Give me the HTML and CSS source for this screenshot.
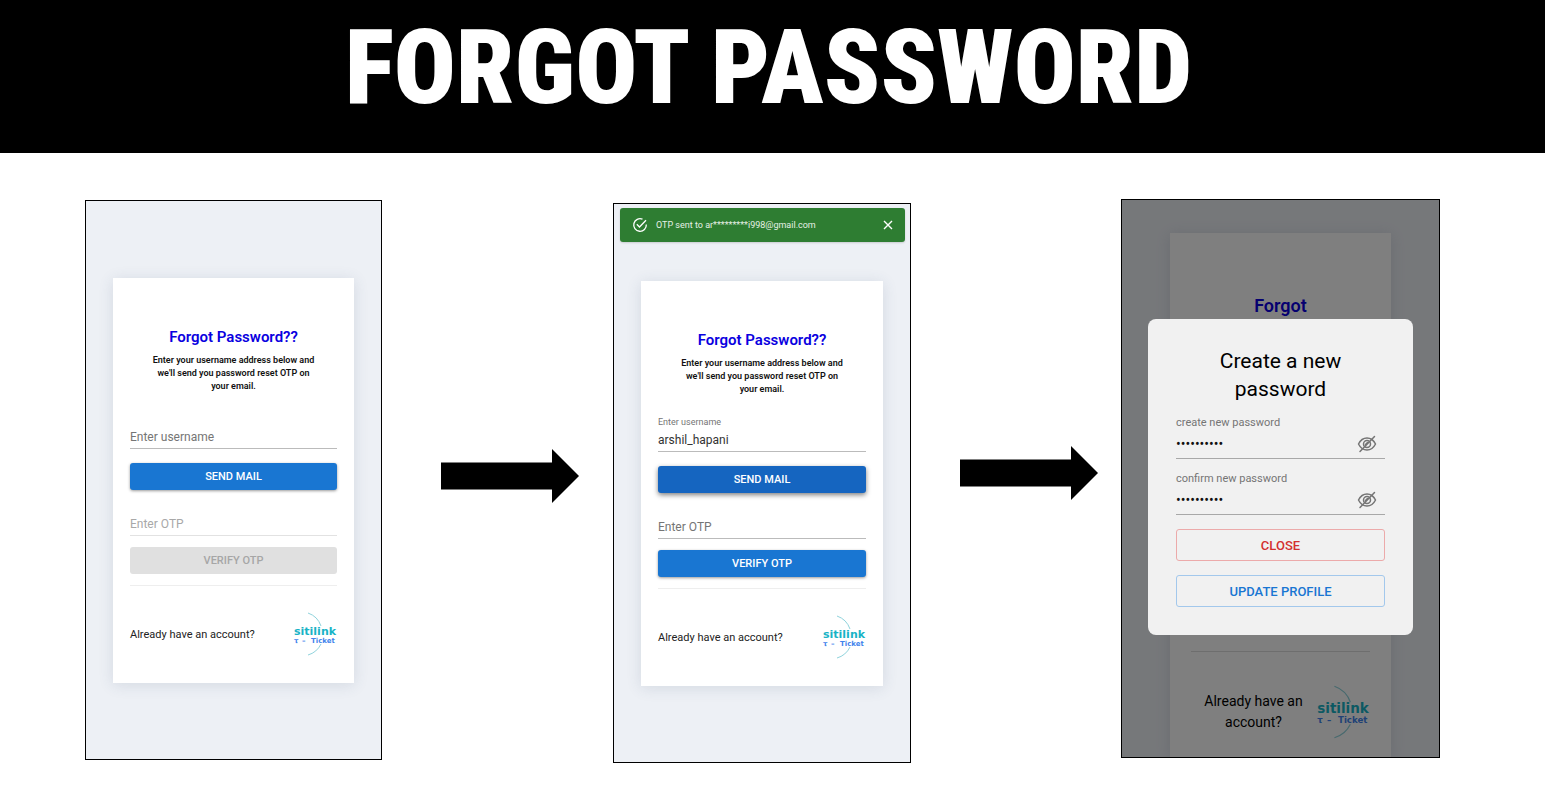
FILE: index.html
```html
<!DOCTYPE html>
<html lang="en">
<head>
<meta charset="utf-8">
<meta name="viewport" content="width=device-width, initial-scale=1">
<title>Forgot Password</title>
<link rel="stylesheet" href="styles.css">
</head>
<body>
<header class="banner"><h1>FORGOT PASSWORD</h1></header>

<main class="flow">
  <section class="phone phone-request">
    <form class="card">
      <h2>Forgot Password??</h2>
      <p class="hint">Enter your username address below and we'll send you password reset OTP on your email.</p>
      <div class="field"><input type="text" placeholder="Enter username" aria-label="Enter username"></div>
      <button type="button" class="btn">SEND MAIL</button>
      <div class="field field-otp field-off"><input type="text" placeholder="Enter OTP" aria-label="Enter OTP" disabled></div>
      <button type="button" class="btn" disabled>VERIFY OTP</button>
      <hr>
      <div class="account">
        <span>Already have an account?</span>
        <svg class="logo" viewBox="0 0 44 44">
          <path d="M15 1A21 21 0 0 1 28 14M28 32A21 21 0 0 1 15 43"/>
          <text x="1" y="23" class="logo-name">sitilink</text>
          <text x="1" y="31" class="logo-sub">τ</text>
          <text x="9" y="31" class="logo-sub">–</text>
          <text x="18" y="31" class="logo-sub">Ticket</text>
        </svg>
      </div>
    </form>
  </section>

  <svg class="arrow arrow-first" viewBox="0 0 138 56" aria-hidden="true"><path d="M0 14.500H111V1L138 28L111 55V41.500H0Z"/></svg>

  <section class="phone phone-sent">
    <div class="toast" role="status">
      <svg class="check" viewBox="0 0 16 16" aria-hidden="true"><path d="M14.300 7.500A6.300 6.300 0 1 1 10.500 2.200M4.800 7.300L7.500 10L14 3.300" fill="none" stroke="#fff" stroke-width="1.300"/></svg>
      <span>OTP sent to ar*********i998@gmail.com</span>
      <button type="button" class="dismiss" aria-label="Close"><svg viewBox="0 0 10 10"><path d="M1 1L9 9M9 1L1 9" stroke="#fff" stroke-width="1.400"/></svg></button>
    </div>
    <form class="card">
      <h2>Forgot Password??</h2>
      <p class="hint">Enter your username address below and we'll send you password reset OTP on your email.</p>
      <div class="field field-filled"><label for="user">Enter username</label><input id="user" type="text" value="arshil_hapani"></div>
      <button type="button" class="btn btn-active">SEND MAIL</button>
      <div class="field field-otp"><input type="text" placeholder="Enter OTP" aria-label="Enter OTP"></div>
      <button type="button" class="btn">VERIFY OTP</button>
      <hr>
      <div class="account">
        <span>Already have an account?</span>
        <svg class="logo" viewBox="0 0 44 44">
          <path d="M15 1A21 21 0 0 1 28 14M28 32A21 21 0 0 1 15 43"/>
          <text x="1" y="23" class="logo-name">sitilink</text>
          <text x="1" y="31" class="logo-sub">τ</text>
          <text x="9" y="31" class="logo-sub">–</text>
          <text x="18" y="31" class="logo-sub">Ticket</text>
        </svg>
      </div>
    </form>
  </section>

  <svg class="arrow arrow-second" viewBox="0 0 138 56" aria-hidden="true"><path d="M0 14.500H111V1L138 28L111 55V41.500H0Z"/></svg>

  <section class="phone phone-reset">
    <div class="card">
      <h2>Forgot</h2>
      <hr>
      <div class="account">
        <span>Already have an account?</span>
        <svg class="logo" viewBox="0 0 44 44">
          <path d="M15 1A21 21 0 0 1 28 14M28 32A21 21 0 0 1 15 43"/>
          <text x="1" y="23" class="logo-name">sitilink</text>
          <text x="1" y="31" class="logo-sub">τ</text>
          <text x="9" y="31" class="logo-sub">–</text>
          <text x="18" y="31" class="logo-sub">Ticket</text>
        </svg>
      </div>
    </div>
    <div class="backdrop">
      <form class="dialog">
        <h3>Create a new password</h3>
        <div class="secret">
          <label for="new-pass">create new password</label>
          <div class="secret-row">
            <input id="new-pass" type="password" value="abcdefghij">
            <button type="button" class="reveal" aria-label="Show password"><svg viewBox="0 0 20 18"><path d="M1.500 9C3.500 5 6.500 3 10 3s6.500 2 8.500 6c-2 4-5 6-8.500 6S3.500 13 1.500 9Z"/><circle cx="10" cy="9" r="3.500"/><path d="M8.500 9.500L10.500 7.500M3 16.500L17.500 1.500"/></svg></button>
          </div>
        </div>
        <div class="secret">
          <label for="confirm-pass">confirm new password</label>
          <div class="secret-row">
            <input id="confirm-pass" type="password" value="abcdefghij">
            <button type="button" class="reveal" aria-label="Show password"><svg viewBox="0 0 20 18"><path d="M1.500 9C3.500 5 6.500 3 10 3s6.500 2 8.500 6c-2 4-5 6-8.500 6S3.500 13 1.500 9Z"/><circle cx="10" cy="9" r="3.500"/><path d="M8.500 9.500L10.500 7.500M3 16.500L17.500 1.500"/></svg></button>
          </div>
        </div>
        <button type="button" class="outlined outlined-red">CLOSE</button>
        <button type="button" class="outlined outlined-blue">UPDATE PROFILE</button>
      </form>
    </div>
  </section>
</main>
</body>
</html>
```
FILE: styles.css
```css
* { box-sizing: border-box; }
body { margin: 0; background: #fff; color: #000; font-family: Roboto, "Liberation Sans", sans-serif; }
h1, h2, h3, p { margin: 0; }
input, button { font-family: inherit; padding: 0; border: 0; background: none; min-width: 0; }

.banner { background: #000; color: #fff; text-align: center; padding: 8px 8px 25px 0; }
.banner h1 { font: 900 103px/120px "Liberation Sans Narrow", "Roboto Condensed", "Liberation Sans", sans-serif; }

.flow {
  display: grid;
  grid-template-columns: 85fr 297fr 59fr 138fr 34fr 298fr 49fr 138fr 23fr 319fr 105fr;
  align-items: start;
  padding: 46px 0;
}
.phone { position: relative; background: #edf0f5; border: 1px solid #000; overflow: hidden; }
.phone-request { grid-column: 2; margin-top: 1px; padding: 77px 27px 76px; }
.phone-sent { grid-column: 6; margin-top: 4px; padding: 77px 27px 76px; }
.phone-reset { grid-column: 10; padding: 33px 48px 0; }
.arrow { width: 100%; display: block; }
.arrow-first { grid-column: 4; margin-top: 249px; }
.arrow-second { grid-column: 8; margin-top: 246px; }

.card { display: flex; flex-direction: column; background: #fff; padding: 49px 17px 27px; box-shadow: 0 2px 14px rgba(60, 80, 110, 0.14); }
.card h2 { color: #0a00e0; font-size: 15px; line-height: 20px; font-weight: 600; text-align: center; }
.hint { margin-top: 7px; padding: 0 20px; font-size: 9px; line-height: 13px; font-weight: 600; color: #111; text-align: center; }
.field { display: flex; flex-direction: column; margin-top: 20px; padding: 13px 0 1px; border-bottom: 1px solid #bbb; }
.field-filled { padding-top: 0; }
.field label { font-size: 9px; line-height: 12px; margin-bottom: 1px; color: #757575; }
.field input { height: 21px; width: 100%; font-size: 12px; color: #333; outline: 0; }
.field input::placeholder { color: #757575; opacity: 1; }
.field-otp { margin-top: 10px; }
.field-off { border-color: #e2e2e2; }
.field-off input::placeholder { color: #a8a8a8; }
.btn { margin-top: 14px; height: 27px; border-radius: 3px; background: #1976d2; color: #fff; font-size: 11px; font-weight: 500; box-shadow: 0 1px 3px rgba(0, 0, 0, 0.4); }
.field-otp + .btn { margin-top: 11px; }
.btn-active { background: #1565c0; box-shadow: 0 2px 5px rgba(0, 0, 0, 0.5); }
.btn:disabled { background: #e0e0e0; color: #a6a6a6; box-shadow: none; }
.card hr { width: 100%; height: 1px; margin: 11px 0 0; border: 0; background: #eee; }
.account { display: flex; justify-content: space-between; align-items: center; margin-top: 26px; font-size: 11px; color: #222; }
.logo { width: 44px; height: 44px; flex: none; }
.logo path { fill: none; stroke: #8fd3dc; stroke-width: 1; }
.logo-name { font: 700 11px "DejaVu Sans", sans-serif; fill: #19b3c6; }
.logo-sub { font: 700 7px "DejaVu Sans", sans-serif; fill: #3f83ec; }

.toast { position: absolute; top: 4px; left: 6px; right: 5px; height: 34px; display: flex; align-items: center; padding: 0 12px; border-radius: 3px; background: #2e7d32; color: #e6f0e6; font-size: 9px; box-shadow: 0 1px 2px rgba(0, 0, 0, 0.15); }
.check { width: 16px; height: 16px; margin-right: 8px; }
.dismiss { display: flex; margin-left: auto; }
.dismiss svg { width: 10px; height: 10px; }

.phone-reset .card { padding: 63px 21px 18px; }
.phone-reset h2 { font-size: 18px; }
.phone-reset hr { margin-top: 335px; background: #ddd; }
.phone-reset .account { margin-top: 33px; font-size: 14px; line-height: 21px; color: #000; text-align: center; }
.phone-reset .account span { flex: 1; }
.phone-reset .logo { width: 54px; height: 54px; }
.backdrop { position: absolute; inset: 0; padding: 119px 26px 0; background: rgba(0, 0, 0, 0.5); }
.dialog { display: flex; flex-direction: column; padding: 28px; border-radius: 8px; background: #f1f1f1; }
.dialog h3 { padding: 0 30px; font-size: 21px; line-height: 28px; font-weight: 400; text-align: center; }
.secret { margin-top: 13px; border-bottom: 1px solid #a8a8a8; }
.secret label { display: block; font-size: 11px; line-height: 14px; color: #757575; }
.secret-row { display: flex; align-items: center; height: 28px; padding-right: 8px; }
.secret input { flex: 1; font-size: 14px; color: #111; }
.reveal, .reveal svg { display: block; width: 20px; height: 18px; }
.reveal svg { fill: none; stroke: #757575; stroke-width: 1.5; stroke-linecap: round; }
.outlined { height: 32px; margin-top: 14px; border: 1px solid; border-radius: 3px; font-size: 13px; font-weight: 500; }
.outlined-red { color: #d32f2f; border-color: #ecaaaa; }
.outlined-blue { color: #1976d2; border-color: #a3c8ec; }
```
